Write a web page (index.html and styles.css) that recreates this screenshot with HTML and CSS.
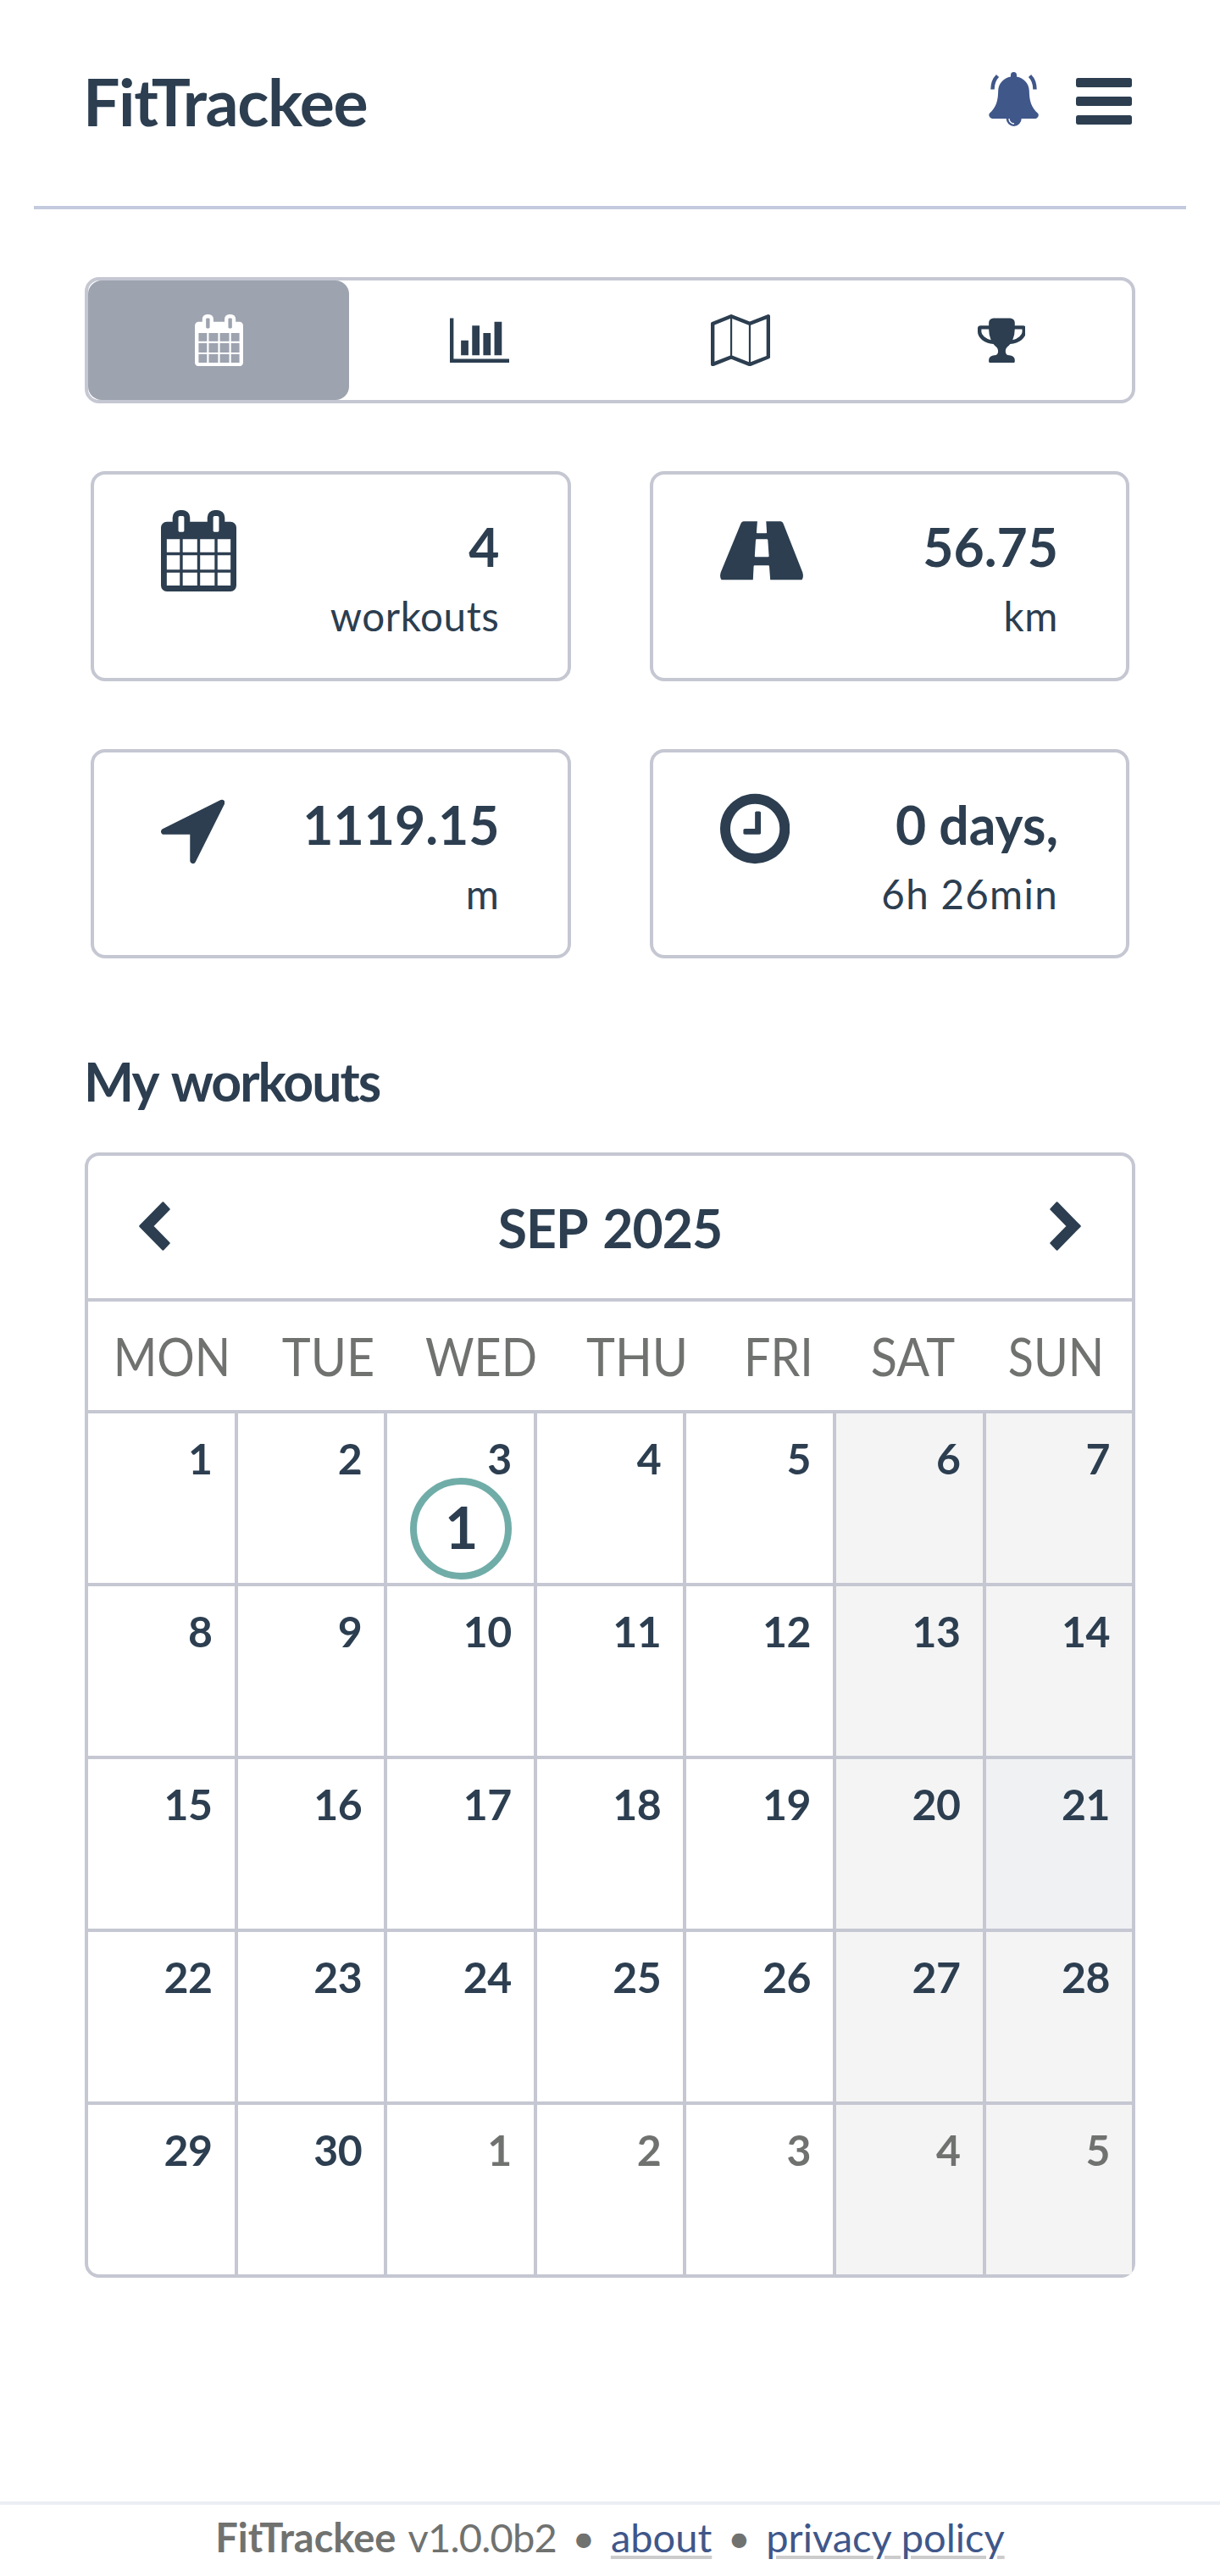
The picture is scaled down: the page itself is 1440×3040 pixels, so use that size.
FILE: index.html
```html
<!DOCTYPE html>
<html lang="en">
<head>
<meta charset="utf-8">
<title>FitTrackee</title>
<link rel="stylesheet" href="styles.css">
</head>
<body>
<svg class="sprite" aria-hidden="true">
  <symbol id="calendar" viewBox="64 0 1664 1792"><path d="M192 1664h288v-288h-288v288zm352 0h320v-288h-320v288zm-352-352h288v-320h-288v320zm352 0h320v-320h-320v320zm-352-384h288v-288h-288v288zm736 736h320v-288h-320v288zm-384-736h320v-288h-320v288zm768 736h288v-288h-288v288zm-384-352h320v-320h-320v320zm-352-864v-288q0-13-9.500-22.500t-22.500-9.500h-64q-13 0-22.500 9.500t-9.500 22.500v288q0 13 9.500 22.500t22.500 9.500h64q13 0 22.500-9.500t9.500-22.500zm736 864h288v-320h-288v320zm-384-384h320v-288h-320v288zm384 0h288v-288h-288v288zm32-480v-288q0-13-9.500-22.500t-22.500-9.500h-64q-13 0-22.500 9.500t-9.500 22.500v288q0 13 9.500 22.500t22.500 9.500h64q13 0 22.500-9.500t9.500-22.500zm384-64v1280q0 52-38 90t-90 38h-1408q-52 0-90-38t-38-90v-1280q0-52 38-90t90-38h128v-96q0-66 47-113t113-47h64q66 0 113 47t47 113v96h384v-96q0-66 47-113t113-47h64q66 0 113 47t47 113v96h128q52 0 90 38t38 90z"/></symbol>
</svg>

<header class="header">
  <div class="header-row">
    <div class="brand">FitTrackee</div>
    <div class="header-icons">
      <svg class="bell" viewBox="0 0 59 64">
        <path d="M26 5.500V3.500a3.500 3.500 0 0 1 7 0v2C41.500 7 47.500 13.500 47.800 22C48 34 50 41.500 58.300 49Q60 53 55.500 55H38.700a9 9 0 0 1-18 0H4Q-.8 53 .7 49C9 41.500 11 34 11.200 22C11.500 13.500 17.500 7 26 5.500Z"/>
        <path d="M4.500 20.500Q4.500 10.500 10.500 4.500M54.500 20.500Q54.500 10.500 48.500 4.500" fill="none" stroke="currentColor" stroke-width="4.500"/>
        <path d="M24 55a6 6 0 0 0 6 6" fill="none" stroke="#fff" stroke-width="1.300"/>
      </svg>
      <svg class="bars" viewBox="0 0 66 55"><rect width="66" height="11" rx="2.500"/><rect y="22" width="66" height="11" rx="2.500"/><rect y="44" width="66" height="11" rx="2.500"/></svg>
    </div>
  </div>
</header>

<main class="main">
  <nav class="tabs">
    <div class="tab active"><svg class="tab-icon" width="57" height="61.300"><use href="#calendar"/></svg></div>
    <div class="tab"><svg class="tab-icon" viewBox="0 0 2048 1792"><path d="M640 896v512h-256v-512h256zm384-512v1024h-256v-1024h256zm1024 1152v128h-2048v-1536h128v1408h1920zm-640-896v768h-256v-768h256zm384-384v1152h-256v-1152h256z"/></svg></div>
    <div class="tab"><svg class="tab-icon" viewBox="0 0 2048 1792"><path d="M2020 11q28 20 28 53v1408q0 20-11 36t-29 23l-640 256q-24 11-48 0l-616-246-616 246q-10 5-24 5-19 0-36-11-28-20-28-53v-1408q0-20 11-36t29-23l640-256q24-11 48 0l616 246 616-246q32-13 60 6zm-1284 135v1270l576 230v-1270zm-608 217v1270l544-217v-1270zm1792 1066v-1270l-544 217v1270z" fill-rule="evenodd"/></svg></div>
    <div class="tab"><svg class="tab-icon" viewBox="64 0 1664 1792"><path d="M522 883q-74-162-74-371h-256v96q0 78 94.500 162t235.500 113zm1078-275v-96h-256q0 209-74 371 141-29 235.500-113t94.500-162zm128-128v128q0 71-41.500 143t-112 130-173 97.500-215.500 44.500q-42 54-95 95-38 34-52.500 72.500t-14.500 89.500q0 54 30.500 91t97.500 37q75 0 133.500 45.500t58.500 114.500v64q0 14-9 23t-23 9h-832q-14 0-23-9t-9-23v-64q0-69 58.500-114.500t133.500-45.500q67 0 97.500-37t30.500-91q0-51-14.500-89.500t-52.500-72.500q-53-41-95-95-113-5-215.500-44.500t-173-97.500-112-130-41.500-143v-128q0-40 28-68t68-28h288v-96q0-66 47-113t113-47h576q66 0 113 47t47 113v96h288q40 0 68 28t28 68z"/></svg></div>
  </nav>

  <section class="stats">
    <div class="stat">
      <svg class="stat-icon" width="89" height="96"><use href="#calendar"/></svg>
      <div class="stat-text"><div class="value">4</div><div class="unit">workouts</div></div>
    </div>
    <div class="stat">
      <svg class="stat-icon" viewBox="0 0 98 96"><path fill-rule="evenodd" d="M27.500 13.300H43.900L42.900 26.500Q43 27.300 43.800 27.300H54.200Q55 27.300 55.100 26.500L54.300 13.300H71.500Q73.600 13.300 74.500 15.800L97.300 73.500Q98.900 79.500 96.500 82.300H59.200L58 66.300Q57.900 65.300 57 65.300H40.600Q39.700 65.300 39.600 66.300L38.800 82.300H1.500Q-.9 79.500 .7 73.500L24.500 15.800Q25.400 13.300 27.500 13.300ZM43 34.300Q42.100 34.300 42 35.200L40.800 54.300Q40.800 55.300 41.800 55.300H56.700Q57.600 55.300 57.600 54.300L56.300 35.200Q56.200 34.300 55.300 34.300Z"/></svg>
      <div class="stat-text"><div class="value">56.75</div><div class="unit">km</div></div>
    </div>
    <div class="stat">
      <svg class="stat-icon" viewBox="192 0 1408 1792"><path d="M1593 349l-640 1280q-17 35-57 35-5 0-15-2-22-5-35.500-22.500t-13.500-39.500v-576h-576q-22 0-39.500-13.500t-22.500-35.500 4-42 29-30l1280-640q13-7 29-7 27 0 45 19 15 14 18.500 34.500t-6.500 39.500z"/></svg>
      <div class="stat-text"><div class="value">1119.15</div><div class="unit">m</div></div>
    </div>
    <div class="stat">
      <svg class="stat-icon" viewBox="128 0 1536 1792"><path d="M1024 544v448q0 14-9 23t-23 9h-320q-14 0-23-9t-9-23v-64q0-14 9-23t23-9h224v-352q0-14 9-23t23-9h64q14 0 23 9t9 23zm416 352q0-148-73-273t-198-198-273-73-273 73-198 198-73 273 73 273 198 198 273 73 273-73 198-198 73-273zm224 0q0 209-103 385.500t-279.500 279.500-385.500 103-385.500-103-279.500-279.500-103-385.500 103-385.500 279.500-279.500 385.500-103 385.500 103 279.500 279.500 103 385.500z"/></svg>
      <div class="stat-text"><div class="value">0 days,</div><div class="unit loose">6h 26min</div></div>
    </div>
  </section>

  <h1 class="title">My workouts</h1>

  <section class="calendar">
    <div class="cal-header">
      <svg class="chevron" viewBox="0 0 37 58"><path d="M28.500 1.500L35.500 9L16 29L35.500 49L28.500 56.500L1.500 29Z"/></svg>
      <div class="month">SEP 2025</div>
      <svg class="chevron" viewBox="0 0 37 58"><path d="M8.500 1.500L1.500 9L21 29L1.500 49L8.500 56.500L35.500 29Z"/></svg>
    </div>
    <div class="weekdays"><span>MON</span><span>TUE</span><span>WED</span><span>THU</span><span>FRI</span><span>SAT</span><span>SUN</span></div>
    <div class="days">
      <div class="day">1</div><div class="day">2</div><div class="day">3<div class="count">1</div></div><div class="day">4</div><div class="day">5</div><div class="day weekend">6</div><div class="day weekend">7</div>
      <div class="day">8</div><div class="day">9</div><div class="day">10</div><div class="day">11</div><div class="day">12</div><div class="day weekend">13</div><div class="day weekend">14</div>
      <div class="day">15</div><div class="day">16</div><div class="day">17</div><div class="day">18</div><div class="day">19</div><div class="day weekend">20</div><div class="day today">21</div>
      <div class="day">22</div><div class="day">23</div><div class="day">24</div><div class="day">25</div><div class="day">26</div><div class="day weekend">27</div><div class="day weekend">28</div>
      <div class="day">29</div><div class="day">30</div><div class="day other">1</div><div class="day other">2</div><div class="day other">3</div><div class="day weekend other">4</div><div class="day weekend other">5</div>
    </div>
  </section>
</main>

<footer class="footer">
  <strong>FitTrackee</strong><span class="version">v1.0.0b2</span><span class="dot">•</span><a class="link">about</a><span class="dot">•</span><a class="link policy">privacy policy</a>
</footer>
</body>
</html>
```
FILE: styles.css
```css
* { box-sizing: border-box; }
body {
  margin: 0;
  height: 3040px;
  display: flex;
  flex-direction: column;
  background: #fff;
  color: #2c3e50;
  font-family: Lato, "Noto Sans", sans-serif;
}
svg { display: block; flex: none; fill: currentColor; }
.sprite { width: 0; height: 0; position: absolute; }

.header {
  height: 247px;
  margin: 0 40px;
  padding: 70px 64px 0 58px;
  border-bottom: 4px solid #c4cbde;
}
.header-row { height: 98px; display: flex; justify-content: space-between; align-items: center; }
.brand { font-size: 77px; font-weight: 700; line-height: 98px; letter-spacing: -1.4px; }
.header-icons { display: flex; align-items: center; gap: 44px; }
.bell { width: 59px; height: 64px; margin-bottom: 4px; color: #40578a; }
.bars { width: 66px; height: 55px; }

.main { margin: 80px 100px 0; }

.tabs {
  display: flex;
  height: 149px;
  border: 4px solid #c5c7d2;
  border-radius: 17px;
}
.tab { flex: 1; display: flex; align-items: center; justify-content: center; border-radius: 16px; }
.tab.active { background: #9da3af; color: #fff; }
.tab-icon { height: 61.3px; }

.stats {
  display: grid;
  grid-template-columns: 1fr 1fr;
  grid-auto-rows: 247.6px;
  gap: 80px 93px;
  margin: 80px 7px 0;
}
.stat {
  display: flex;
  justify-content: space-between;
  padding: 42px 80px 0 79px;
  border: 4px solid #c5c7d2;
  border-radius: 17px;
}
.stat-icon { height: 96px; }
.stat-text { padding-top: 1px; text-align: right; }
.value { font-size: 62.5px; font-weight: 700; line-height: 83px; }
.unit { font-size: 47.5px; line-height: 81px; letter-spacing: 0.6px; }
.unit.loose { letter-spacing: 1.3px; }

.title {
  margin: 105px 0 44px -1px;
  font-size: 62.5px;
  font-weight: 700;
  line-height: 80px;
  letter-spacing: -2px;
  word-spacing: 5px;
}

.calendar { border: 4px solid #c5c7d2; border-radius: 17px; }
.cal-header {
  display: flex;
  align-items: center;
  justify-content: space-between;
  height: 172px;
  padding: 0 60px;
  border-bottom: 4px solid #c5c7d2;
}
.chevron {
  width: 37px;
  height: 58px;
  margin-bottom: 2px;
  stroke: currentColor;
  stroke-width: 2.5;
  stroke-linejoin: round;
}
.month { font-size: 62.5px; font-weight: 700; letter-spacing: -1px; word-spacing: 5px; }
.weekdays {
  display: grid;
  grid-template-columns: 198px 171px 190px 178px 156px 161px 177px;
  height: 132px;
  border-bottom: 4px solid #c5c7d2;
  color: #707270;
  font-size: 62.5px;
  line-height: 128px;
  text-align: center;
}
.weekdays span { transform: scaleX(0.89); }
.weekdays span:nth-child(even) { transform: scaleX(0.92); }
.days { display: grid; grid-template-columns: repeat(6, 176.6px) 1fr; }
.day {
  display: flex;
  flex-direction: column;
  align-items: flex-end;
  height: 204px;
  padding: 23px 26px 0 0;
  border-right: 4px solid #c5c7d2;
  border-bottom: 4px solid #c5c7d2;
  font-size: 50px;
  font-weight: 700;
  line-height: 60px;
  letter-spacing: -0.5px;
}
.day:nth-child(7n) { border-right: 0; }
.day:nth-child(n+29) { height: 200px; border-bottom: 0; }
.weekend { background: #f4f4f4; }
.today { background: #eff1f3; }
.other { color: #707270; }
.count {
  align-self: center;
  width: 120px;
  height: 120px;
  margin: -7px -28px 0 0;
  border: 8px solid #71ada8;
  border-radius: 50%;
  font-size: 68px;
  line-height: 99px;
  text-align: center;
}

.footer {
  display: flex;
  justify-content: center;
  height: 88px;
  margin-top: auto;
  border-top: 4px solid #ebeef3;
  color: #707270;
  font-size: 47px;
  line-height: 76px;
}
.version { margin-left: 14px; letter-spacing: -0.8px; }
.dot { width: 64px; text-align: center; }
.link {
  color: #40578a;
  text-decoration: underline #ccc 4px;
  text-underline-offset: 4px;
}
```
